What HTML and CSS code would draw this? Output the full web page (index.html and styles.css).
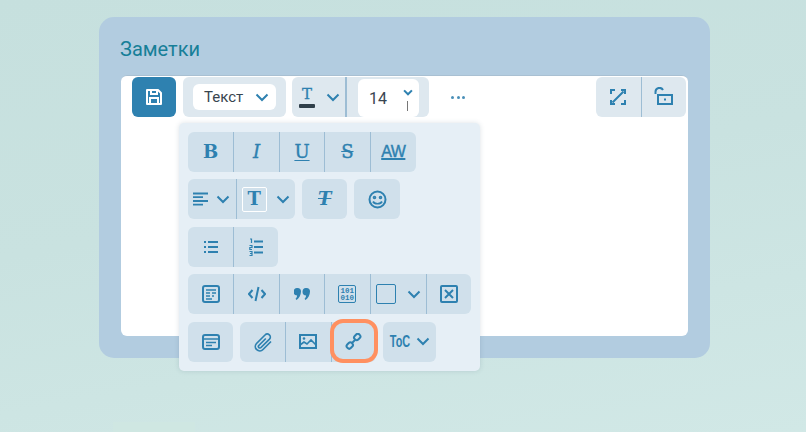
FILE: index.html
```html
<!DOCTYPE html>
<html lang="ru">
<head>
<meta charset="utf-8">
<title>Заметки</title>
<link rel="stylesheet" href="styles.css">
</head>
<body>
<section class="card">
  <h2 class="title">Заметки</h2>
  <div class="editor">
    <div class="toolbar">
      <button class="save"><svg width="18" height="18" viewBox="0 0 18 18" fill="none" stroke="#fff" stroke-width="2"><path d="M2 2h11l3 3v11H2z" stroke-linejoin="round"/><path d="M6 2v4h6V2M5 16v-6h8v6"/></svg></button>
      <div class="tgroup text-group">
        <div class="select"><span>Текст</span><svg class="chev" width="14" height="9" viewBox="0 0 14 9"><path d="M1.500 1.500 7 7l5.500-5.500"/></svg></div>
      </div>
      <div class="tgroup size-group">
        <div class="color-btn">
          <div class="color-t"><span class="dark-t">T</span><i class="bar"></i></div>
          <svg class="chev" width="14" height="9" viewBox="0 0 14 9"><path d="M1.500 1.500 7 7l5.500-5.500"/></svg>
        </div>
        <div class="size-input"><span>14</span><svg class="chev small" width="10" height="7" viewBox="0 0 14 9"><path d="M1.500 1.500 7 7l5.500-5.500"/></svg><i class="caret"></i></div>
      </div>
      <div class="more"><i></i><i></i><i></i></div>
      <div class="tgroup right-group">
        <button class="tbtn"><svg width="16" height="16" viewBox="0 0 16 16" fill="none" stroke="#2e81b0" stroke-width="2"><path d="M1 5V1h4M11 1h4v4M15 11v4h-4M5 15H1v-4M2.500 13.500l11-11"/></svg></button>
        <button class="tbtn"><svg width="20" height="20" viewBox="0 0 20 20" fill="none" stroke="#2e81b0" stroke-width="2"><path d="M1.500 7V5a4 4 0 0 1 7.500-2"/><rect x="4" y="8" width="14" height="9"/><path d="M11 11.500v2"/></svg></button>
      </div>
    </div>
    <div class="popup">
      <div class="row">
        <div class="group wide">
          <button class="btn"><span class="glyph">B</span></button>
          <button class="btn"><span class="glyph ital">I</span></button>
          <button class="btn"><span class="glyph under">U</span></button>
          <button class="btn"><span class="glyph strike">S</span></button>
          <button class="btn"><span class="aw">AW</span></button>
        </div>
      </div>
      <div class="row">
        <div class="group">
          <button class="btn align"><svg width="15" height="14" viewBox="0 0 15 14" fill="none" stroke="#2e81b0" stroke-width="1.800"><path d="M0 1.500h15M0 5.200h10M0 9h15M0 12.700h10"/></svg><svg class="chev" width="14" height="9" viewBox="0 0 14 9"><path d="M1.500 1.500 7 7l5.500-5.500"/></svg></button>
          <button class="btn tsel"><span class="tbox"><span class="glyph">T</span></span><svg class="chev" width="14" height="9" viewBox="0 0 14 9"><path d="M1.500 1.500 7 7l5.500-5.500"/></svg></button>
        </div>
        <div class="group"><button class="btn"><span class="glyph clear">T</span></button></div>
        <div class="group"><button class="btn"><svg width="19" height="19" viewBox="0 0 19 19" fill="none" stroke="#2e81b0" stroke-width="2"><circle cx="9.500" cy="9.500" r="8"/><circle cx="6.500" cy="7.500" r=".8"/><circle cx="12.500" cy="7.500" r=".8"/><path d="M5 11.500c1.500 3 7.500 3 9 0" stroke-width="1.700"/></svg></button></div>
      </div>
      <div class="row tight">
        <div class="group">
          <button class="btn"><svg width="14" height="14" viewBox="0 0 14 14" fill="none" stroke="#2e81b0" stroke-width="2"><path d="M4 2h10M4 7h10M4 12h10M0 2h2M0 7h2M0 12h2"/></svg></button>
          <button class="btn"><svg width="14" height="18" viewBox="0 0 14 18" fill="none" stroke="#2e81b0" stroke-width="1.200"><path d="M5 3.500h9M5 9h9M5 14.500h9" stroke-width="2"/><path d="M1 1h1.500v4M.5 7.500h2.500v2H.8v2H3M.5 13.500h2.500v4H.5M1 15.500h2"/></svg></button>
        </div>
      </div>
      <div class="row">
        <div class="group">
          <button class="btn"><svg width="18" height="18" viewBox="0 0 18 18" fill="none" stroke="#2e81b0" stroke-width="2"><rect x="1" y="1" width="16" height="16" rx="2"/><path d="M4 5h10M4 8h4M10 8h4M4 11h4M10 11h2M4 14h6" stroke-width="1.500"/></svg></button>
          <button class="btn"><svg width="18" height="16" viewBox="0 0 18 16" fill="none" stroke="#2e81b0" stroke-width="2"><path d="M4.500 4 1 8l3.500 4M13.500 4 17 8l-3.500 4M10.500 1l-3 14"/></svg></button>
          <button class="btn"><svg width="16" height="12" viewBox="0 0 16 12" fill="#2e81b0"><path d="M3.500 0a3.500 3.500 0 0 1 3.500 3.500C7 7 5 10.500 2.500 12l-1-1.200c1-.8 1.500-2 1.600-3.300A3.500 3.500 0 0 1 3.500 0zM12.500 0A3.500 3.500 0 0 1 16 3.500c0 3.500-2 7-4.500 8.500l-1-1.200c1-.8 1.500-2 1.600-3.300A3.500 3.500 0 0 1 12.500 0z"/></svg></button>
          <button class="btn"><span class="binary">101<br>010</span></button>
          <button class="btn swatch-btn"><span class="swatch"></span><svg class="chev" width="14" height="9" viewBox="0 0 14 9"><path d="M1.500 1.500 7 7l5.500-5.500"/></svg></button>
          <button class="btn"><svg width="18" height="18" viewBox="0 0 18 18" fill="none" stroke="#2e81b0" stroke-width="2"><rect x="1" y="1" width="16" height="16" rx="1"/><path d="m5 5 8 8M13 5l-8 8"/></svg></button>
        </div>
      </div>
      <div class="row tight">
        <div class="group"><button class="btn"><svg width="18" height="16" viewBox="0 0 18 16" fill="none" stroke="#2e81b0" stroke-width="2"><rect x="1" y="1" width="16" height="14" rx="2"/><path d="M1 5h16M4 8.500h10M4 11.500h6" stroke-width="1.500"/></svg></button></div>
        <div class="group">
          <button class="btn"><svg width="20" height="20" viewBox="0 0 20 20" fill="none" stroke="#2e81b0" stroke-width="1.700"><path d="M18 9.500l-8 8a4.200 4.200 0 0 1-6.500-6L12 3a3 3 0 0 1 4.500 4.200L8 15.500a1.400 1.400 0 0 1-2.200-2l7-7"/></svg></button>
          <button class="btn"><svg width="18" height="15" viewBox="0 0 18 15" fill="none" stroke="#2e81b0" stroke-width="2"><rect x="1" y="1" width="16" height="13"/><circle cx="5" cy="4.500" r="1.300" fill="#2e81b0" stroke="none"/><path d="m1 11 4-3 3 2 4-4 5 5" stroke-width="1.600"/></svg></button>
          <button class="btn link"><svg width="17" height="17" viewBox="0 0 17 17" fill="none" stroke="#2e81b0" stroke-width="2"><rect x="9" y="1.500" width="6.500" height="5" rx="2.200" transform="rotate(-45 12.200 4)"/><rect x="1.500" y="10" width="6.500" height="5" rx="2.200" transform="rotate(-45 4.800 12.500)"/><path d="m7 10 3-3"/></svg></button>
        </div>
        <div class="group"><button class="btn toc"><span class="toc-text">ToC</span><svg class="chev" width="14" height="9" viewBox="0 0 14 9"><path d="M1.500 1.500 7 7l5.500-5.500"/></svg></button></div>
      </div>
    </div>
  </div>
</section>
</body>
</html>
```
FILE: styles.css
```css
* { box-sizing: border-box; }
html, body { height: 100%; }
body {
  margin: 0;
  padding: 17px 96px 0 99px;
  overflow: hidden;
  font-family: Roboto, sans-serif;
  background:
    linear-gradient(#cfe7e2, #cfe7e2) 113px 422px / 82px 10px no-repeat,
    linear-gradient(170deg, #c6e0de 0%, #c9e2e0 45%, #d1e8e6 100%);
}
button { border: 0; padding: 0; background: none; font: inherit; }
.card {
  width: 611px;
  height: 341px;
  background: #b2cce0;
  border-radius: 15px;
  padding: 20px 22px 22px 22px;
}
.title {
  margin: 0 0 14px -1px;
  font-size: 20px;
  line-height: 24px;
  font-weight: 400;
  color: #177f98;
}
.editor {
  position: relative;
  height: 261px;
  background: #fff;
  border-radius: 6px;
  border-top: 1px solid #a9c0d2;
}
.toolbar {
  display: flex;
  align-items: flex-start;
  gap: 7px;
  padding: 1px 2px 0 11px;
}
.tgroup {
  display: flex;
  align-items: center;
  height: 40px;
  background: #dee8ef;
  border-radius: 6px;
}
.save {
  display: flex;
  align-items: center;
  justify-content: center;
  width: 44px;
  height: 40px;
  background: #2e81b0;
  border-radius: 6px;
}
.text-group { width: 103px; padding-left: 10px; }
.select {
  display: flex;
  align-items: center;
  justify-content: space-between;
  width: 83px;
  height: 26px;
  padding: 0 7px 0 11px;
  background: #fff;
  border-radius: 6px;
  font-size: 15px;
  color: #38454f;
}
.chev { flex: none; fill: none; stroke: #2e81b0; stroke-width: 2; }
.size-group { width: 137px; gap: 11px; margin-left: -1px; }
.color-btn {
  display: flex;
  align-items: center;
  justify-content: space-between;
  width: 55px;
  height: 40px;
  padding: 0 5px 0 7px;
  border-right: 2px solid #9dbdd4;
}
.color-t { display: flex; flex-direction: column; align-items: center; width: 16px; }
.dark-t {
  font-family: "DejaVu Serif", serif;
  font-size: 15px;
  line-height: 17px;
  color: #2e81b0;
  -webkit-text-stroke: .3px #2e81b0;
}
.bar { display: block; width: 16px; height: 4px; margin-top: 1px; background: #2f3f4a; border-radius: 1px; }
.size-input {
  position: relative;
  display: flex;
  align-items: center;
  width: 61px;
  height: 38px;
  margin-top: 2px;
  padding-left: 11px;
  background: #fff;
  border-radius: 6px;
  font-size: 16px;
  color: #38454f;
}
.size-input .small { position: absolute; right: 6px; top: 10px; stroke-width: 2.800; }
.caret { position: absolute; right: 11px; top: 22px; width: 1px; height: 10px; background: #777; }
.more { display: flex; gap: 2.500px; margin: 19px 0 0 15px; }
.more i { width: 3px; height: 3px; border-radius: 50%; background: #4a8fb8; }
.right-group { margin-left: auto; }
.tbtn {
  display: flex;
  align-items: center;
  justify-content: center;
  width: 44.500px;
  height: 40px;
}
.tbtn + .tbtn { width: 45.500px; border-left: 1px solid #9dbdd4; }
.popup {
  position: absolute;
  left: 58px;
  top: 47px;
  width: 301px;
  height: 248px;
  padding: 9px;
  display: flex;
  flex-direction: column;
  gap: 7.400px;
  background: #e6eff6;
  border-radius: 5px;
  box-shadow: 0 0 5px rgba(60, 90, 110, .18);
}
.row { display: flex; gap: 7px; height: 40px; }
.group { display: flex; height: 40px; background: #d0e0eb; border-radius: 6px; }
.wide { width: 228px; }
.wide .btn:last-child { flex: 1; }
.btn {
  display: flex;
  align-items: center;
  justify-content: center;
  width: 45.400px;
  height: 40px;
}
.tight .btn { width: 45.200px; }
.btn + .btn { border-left: 1px solid #9dbdd4; }
.glyph { font-family: "DejaVu Serif", serif; color: #2e81b0; font-size: 18px; line-height: 1; font-weight: 700; }
.ital { font-style: italic; font-weight: 400; -webkit-text-stroke: .4px #2e81b0; }
.under { text-decoration: underline; text-underline-offset: 2px; font-weight: 400; -webkit-text-stroke: .4px #2e81b0; }
.strike { text-decoration: line-through; font-weight: 400; -webkit-text-stroke: .4px #2e81b0; }
.clear { font-style: italic; text-decoration: line-through; }
.aw {
  font-family: "Liberation Sans", sans-serif;
  font-size: 16px;
  font-weight: 400;
  color: #2e81b0;
  letter-spacing: -.5px;
  text-decoration: underline;
  text-decoration-thickness: 2px;
  -webkit-text-stroke: .4px #2e81b0;
}
.align { width: 47.600px; gap: 8px; justify-content: flex-start; padding-left: 5px; }
.tsel { width: 59.400px; justify-content: flex-start; padding-left: 5px; gap: 9px; }
.tbox {
  display: flex;
  align-items: center;
  justify-content: center;
  width: 25px;
  height: 25px;
  border: 1px solid #fff;
  border-radius: 2px;
}
.binary {
  display: block;
  width: 18px;
  height: 18px;
  padding-top: 2px;
  border: 1.500px solid #2e81b0;
  border-radius: 2px;
  font-family: "Liberation Mono", monospace;
  font-weight: 700;
  font-size: 7.500px;
  line-height: 6.500px;
  text-align: center;
  color: #2e81b0;
}
.swatch-btn { width: 56px; gap: 11px; justify-content: flex-start; padding-left: 5px; }
.swatch { width: 20px; height: 20px; border: 1px solid #2e81b0; border-radius: 2px; }
.link { position: relative; }
.link::after {
  content: "";
  box-sizing: border-box;
  position: absolute;
  left: -2px;
  top: -3px;
  width: 48px;
  height: 44px;
  border: 4px solid #ff9060;
  border-radius: 13px;
}
.tight .toc { width: 53px; gap: 6px; padding-left: 7px; justify-content: flex-start; }
.toc-text {
  display: flex;
  justify-content: center;
  width: 20px;
  font-family: "Liberation Sans", sans-serif;
  font-weight: 700;
  font-size: 16px;
  color: #2e81b0;
  transform: scaleX(.68);
  white-space: nowrap;
}
```
